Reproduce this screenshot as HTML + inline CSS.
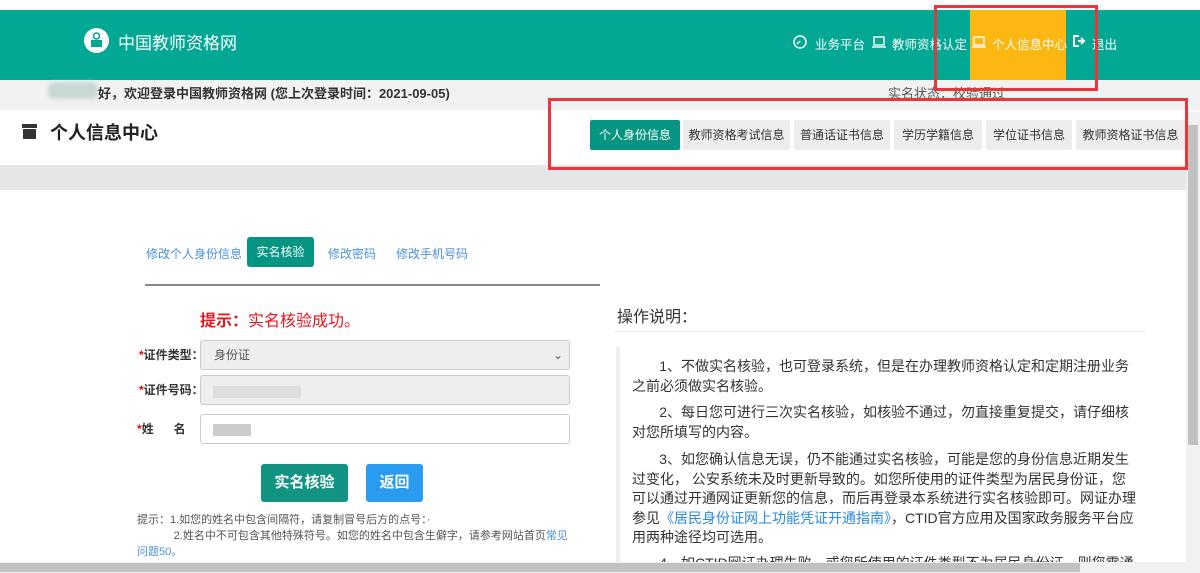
<!DOCTYPE html>
<html style="overflow:hidden;width:1200px;height:573px"><head><meta charset="utf-8"><style>
*{margin:0;padding:0;box-sizing:border-box}
body{width:1200px;height:573px;overflow:hidden;background:#fff;font-family:"Liberation Sans","Noto Sans CJK SC",sans-serif;position:relative;color:#333}
.a{position:absolute;white-space:nowrap}
.hdr{left:0;top:10px;width:1200px;height:70px;background:#02a894}
.tab{position:absolute;top:120px;height:30px;background:#ededed;color:#333;font-size:12px;line-height:30px;text-align:center;border-radius:2px}
.p{font-size:14px;line-height:19.5px;color:#333}
</style></head><body>
<div class="a hdr"></div>
<div class="a" style="left:84px;top:28px;width:25px;height:25px;border-radius:50%;background:#fff"></div>
<svg class="a" style="left:84px;top:28px" width="25" height="25" viewBox="0 0 25 25"><circle cx="12.5" cy="8" r="3" fill="none" stroke="#02a894" stroke-width="1.6"/><rect x="7" y="12" width="11" height="7" fill="#02a894"/></svg>
<div class="a" style="left:118px;top:29px;color:#fff;font-size:17px">中国教师资格网</div>
<div class="a" style="left:970px;top:10px;width:96px;height:70px;background:#fdb713"></div>
<svg class="a" style="left:793px;top:35px" width="14" height="14" viewBox="0 0 14 14"><circle cx="7" cy="7" r="6" fill="none" stroke="#fff" stroke-width="1.5"/><path d="M4 9l3-3" stroke="#fff" stroke-width="1.5"/></svg>
<div class="a" style="left:815px;top:34px;color:#fff;font-size:12.5px">业务平台</div>
<svg class="a" style="left:872px;top:36px" width="14" height="12"><rect x="2" y="1" width="10" height="8" fill="none" stroke="#fff" stroke-width="1.4"/><path d="M0 11h14" stroke="#fff" stroke-width="1.4"/></svg>
<div class="a" style="left:892px;top:34px;color:#fff;font-size:12.5px">教师资格认定</div>
<svg class="a" style="left:972px;top:36px" width="14" height="12"><rect x="2" y="1" width="10" height="8" fill="none" stroke="#fff" stroke-width="1.4"/><path d="M0 11h14" stroke="#fff" stroke-width="1.4"/></svg>
<div class="a" style="left:992px;top:34px;color:#fff;font-size:12.5px">个人信息中心</div>
<svg class="a" style="left:1073px;top:35px" width="13" height="12"><path d="M6 1H1v10h5" fill="none" stroke="#fff" stroke-width="2"/><path d="M5 6h5M8 3l3 3-3 3" fill="none" stroke="#fff" stroke-width="2"/></svg>
<div class="a" style="left:1092px;top:34px;color:#fff;font-size:12.5px">退出</div>
<div class="a" style="left:0;top:80px;width:1200px;height:30px;background:#f2f2f2"></div>
<div class="a" style="left:48px;top:82px;width:50px;height:17px;background:#c8d8d4;border-radius:6px;filter:blur(2px)"></div>
<div class="a" style="left:98px;top:83px;font-size:13px;font-weight:bold;color:#333">好，欢迎登录中国教师资格网 (您上次登录时间：2021-09-05)</div>
<div class="a" style="left:888px;top:83px;font-size:13px;color:#555">实名状态：校验通过</div>
<div class="a" style="left:22px;top:124px;width:15px;height:4px;background:#333"></div>
<div class="a" style="left:23px;top:129px;width:13px;height:10px;background:#333"></div>
<div class="a" style="left:50px;top:119px;font-size:18px;font-weight:bold;color:#222">个人信息中心</div>
<div class="tab" style="left:590px;width:90px;background:#079583;color:#fff">个人身份信息</div>
<div class="tab" style="left:683px;width:107px">教师资格考试信息</div>
<div class="tab" style="left:794px;width:96px">普通话证书信息</div>
<div class="tab" style="left:894px;width:88px">学历学籍信息</div>
<div class="tab" style="left:986px;width:86px">学位证书信息</div>
<div class="tab" style="left:1076px;width:109px">教师资格证书信息</div>
<div class="a" style="left:0;top:165px;width:1186px;height:25px;background:#e6e6e6"></div>
<div class="a" style="left:146px;top:245px;font-size:12px;color:#4a90d9">修改个人身份信息</div>
<div class="a" style="left:247px;top:237px;width:67px;height:30px;background:#079583;border-radius:3px;color:#fff;font-size:12px;line-height:30px;text-align:center">实名核验</div>
<div class="a" style="left:328px;top:245px;font-size:12px;color:#4a90d9">修改密码</div>
<div class="a" style="left:396px;top:245px;font-size:12px;color:#4a90d9">修改手机号码</div>
<div class="a" style="left:145px;top:284px;width:455px;height:2px;background:#888"></div>
<div class="a" style="left:200px;top:307px;font-size:16px;color:#e8141d"><b>提示：</b>实名核验成功。</div>
<div class="a" style="left:139px;top:346px;font-size:12px;font-weight:bold"><span style="color:#e00">*</span>证件类型：</div>
<div class="a" style="left:200px;top:340px;width:370px;height:30px;background:#eee;border:1px solid #ccc;border-radius:3px;font-size:12px;color:#555;line-height:28px;padding-left:13px">身份证<span style="position:absolute;right:6px;top:0">⌄</span></div>
<div class="a" style="left:139px;top:381px;font-size:12px;font-weight:bold"><span style="color:#e00">*</span>证件号码：</div>
<div class="a" style="left:200px;top:375px;width:370px;height:30px;background:#eee;border:1px solid #ccc;border-radius:3px"></div>
<div class="a" style="left:213px;top:386px;width:88px;height:12px;background:#ddd"></div>
<div class="a" style="left:137px;top:420px;font-size:12px;font-weight:bold"><span style="color:#e00">*</span>姓&nbsp;&nbsp;&nbsp;&nbsp;&nbsp;&nbsp;名</div>
<div class="a" style="left:200px;top:414px;width:370px;height:30px;background:#fff;border:1px solid #ccc;border-radius:3px"></div>
<div class="a" style="left:213px;top:424px;width:38px;height:12px;background:#ccc"></div>
<div class="a" style="left:261px;top:464px;width:87px;height:38px;background:#139483;border-radius:3px;color:#fff;font-size:15px;font-weight:bold;line-height:38px;text-align:center">实名核验</div>
<div class="a" style="left:366px;top:464px;width:57px;height:38px;background:#2a9cf0;border-radius:3px;color:#fff;font-size:15px;font-weight:bold;line-height:38px;text-align:center">返回</div>
<div class="a" style="left:137px;top:512px;font-size:11px;color:#555;line-height:16px">提示：1.如您的姓名中包含间隔符，请复制冒号后方的点号：·<br>&nbsp;&nbsp;&nbsp;&nbsp;&nbsp;&nbsp;&nbsp;&nbsp;&nbsp;&nbsp;&nbsp;&nbsp;2.姓名中不可包含其他特殊符号。如您的姓名中包含生僻字，请参考网站首页<span style="color:#4a90d9">常见</span><br><span style="color:#4a90d9">问题50。</span></div>
<div class="a" style="left:617px;top:303px;font-size:16px;color:#333">操作说明：</div>
<div class="a" style="left:614px;top:331px;width:532px;height:1px;background:#eee"></div>
<div class="a" style="left:616px;top:347px;width:4px;height:220px;background:#eee"></div>
<div class="a p" style="left:632px;top:357px">&nbsp;&nbsp;&nbsp;&nbsp;&nbsp;&nbsp;&nbsp;1、不做实名核验，也可登录系统，但是在办理教师资格认定和定期注册业务<br>之前必须做实名核验。</div>
<div class="a p" style="left:632px;top:403px">&nbsp;&nbsp;&nbsp;&nbsp;&nbsp;&nbsp;&nbsp;2、每日您可进行三次实名核验，如核验不通过，勿直接重复提交，请仔细核<br>对您所填写的内容。</div>
<div class="a p" style="left:632px;top:450px">&nbsp;&nbsp;&nbsp;&nbsp;&nbsp;&nbsp;&nbsp;3、如您确认信息无误，仍不能通过实名核验，可能是您的身份信息近期发生<br>过变化， 公安系统未及时更新导致的。如您所使用的证件类型为居民身份证，您<br>可以通过开通网证更新您的信息，而后再登录本系统进行实名核验即可。网证办理<br>参见<span style="color:#2a8ae0">《居民身份证网上功能凭证开通指南》</span>，CTID官方应用及国家政务服务平台应<br>用两种途径均可选用。</div>
<div class="a p" style="left:632px;top:554px">&nbsp;&nbsp;&nbsp;&nbsp;&nbsp;&nbsp;&nbsp;4、如CTID网证办理失败，或您所使用的证件类型不为居民身份证，则您需通</div>
<div class="a" style="left:1186px;top:112px;width:14px;height:461px;background:#f1f1f1"></div>
<div class="a" style="left:1188px;top:125px;width:10px;height:320px;background:#c1c1c1"></div>
<div class="a" style="left:0;top:562px;width:1200px;height:11px;background:#f1f1f1"></div>
<div class="a" style="left:0;top:563px;width:1080px;height:9px;background:#c1c1c1"></div>
<div class="a" style="left:934px;top:5px;width:164px;height:86px;border:3px solid #e8363c"></div>
<div class="a" style="left:548px;top:98px;width:640px;height:72px;border:3px solid #e8363c"></div>
</body></html>
